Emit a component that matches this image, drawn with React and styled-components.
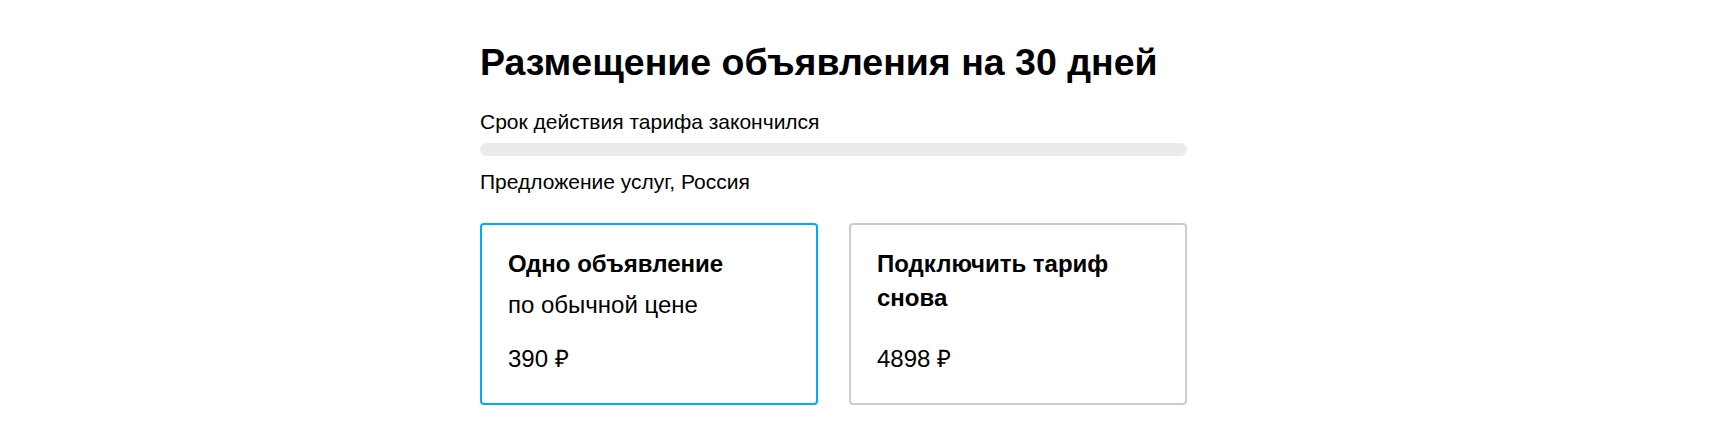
import React from 'react';
import styled, { createGlobalStyle } from 'styled-components';

const GlobalStyle = createGlobalStyle`
  body {
    margin: 0;
    background: #fff;
    font-family: "Liberation Sans", Arial, sans-serif;
    color: #000;
  }
`;

const plans = [
  { id: 'single', title: 'Одно объявление', note: 'по обычной цене', price: '390 ₽', active: true },
  { id: 'renew', title: 'Подключить тариф снова', price: '4898 ₽' },
];

export default function App() {
  return (
    <>
      <GlobalStyle />
      <Page>
        <Title>Размещение объявления на 30 дней</Title>
        <Status>Срок действия тарифа закончился</Status>
        <Progress />
        <Category>Предложение услуг, Россия</Category>
        <Plans>
          {plans.map((p) => (
            <PlanCard key={p.id} $active={p.active}>
              <PlanTitle>{p.title}</PlanTitle>
              {p.note && <PlanNote>{p.note}</PlanNote>}
              <PlanPrice>{p.price}</PlanPrice>
            </PlanCard>
          ))}
        </Plans>
      </Page>
    </>
  );
}

const Page = styled.div`
  width: 707px;
  margin-left: 480px;
  padding-top: 40px;
`;
const Title = styled.h1`
  margin: 0;
  font-size: 37.5px;
  line-height: 44px;
  font-weight: 700;
`;
const Status = styled.div`
  margin-top: 24px;
  font-size: 21px;
  line-height: 28px;
`;
const Progress = styled.div`
  margin-top: 7px;
  height: 13px;
  border-radius: 7px;
  background: #ebebeb;
`;
const Category = styled.div`
  margin-top: 12px;
  font-size: 21px;
  line-height: 28px;
`;
const Plans = styled.div`
  display: grid;
  grid-template-columns: 1fr 1fr;
  column-gap: 31px;
  margin-top: 27px;
`;
const PlanCard = styled.div`
  box-sizing: border-box;
  display: flex;
  flex-direction: column;
  height: 182px;
  padding: 22px 26px 27px;
  border: 2px solid ${(p) => (p.$active ? '#00aaff' : '#cccccc')};
  border-radius: 4px;
  cursor: pointer;
`;
const PlanTitle = styled.div`
  font-size: 24px;
  line-height: 34px;
  font-weight: 700;
`;
const PlanNote = styled.div`
  margin-top: 7px;
  font-size: 24px;
  line-height: 34px;
`;
const PlanPrice = styled.div`
  margin-top: auto;
  font-size: 24px;
  line-height: 34px;
`;
